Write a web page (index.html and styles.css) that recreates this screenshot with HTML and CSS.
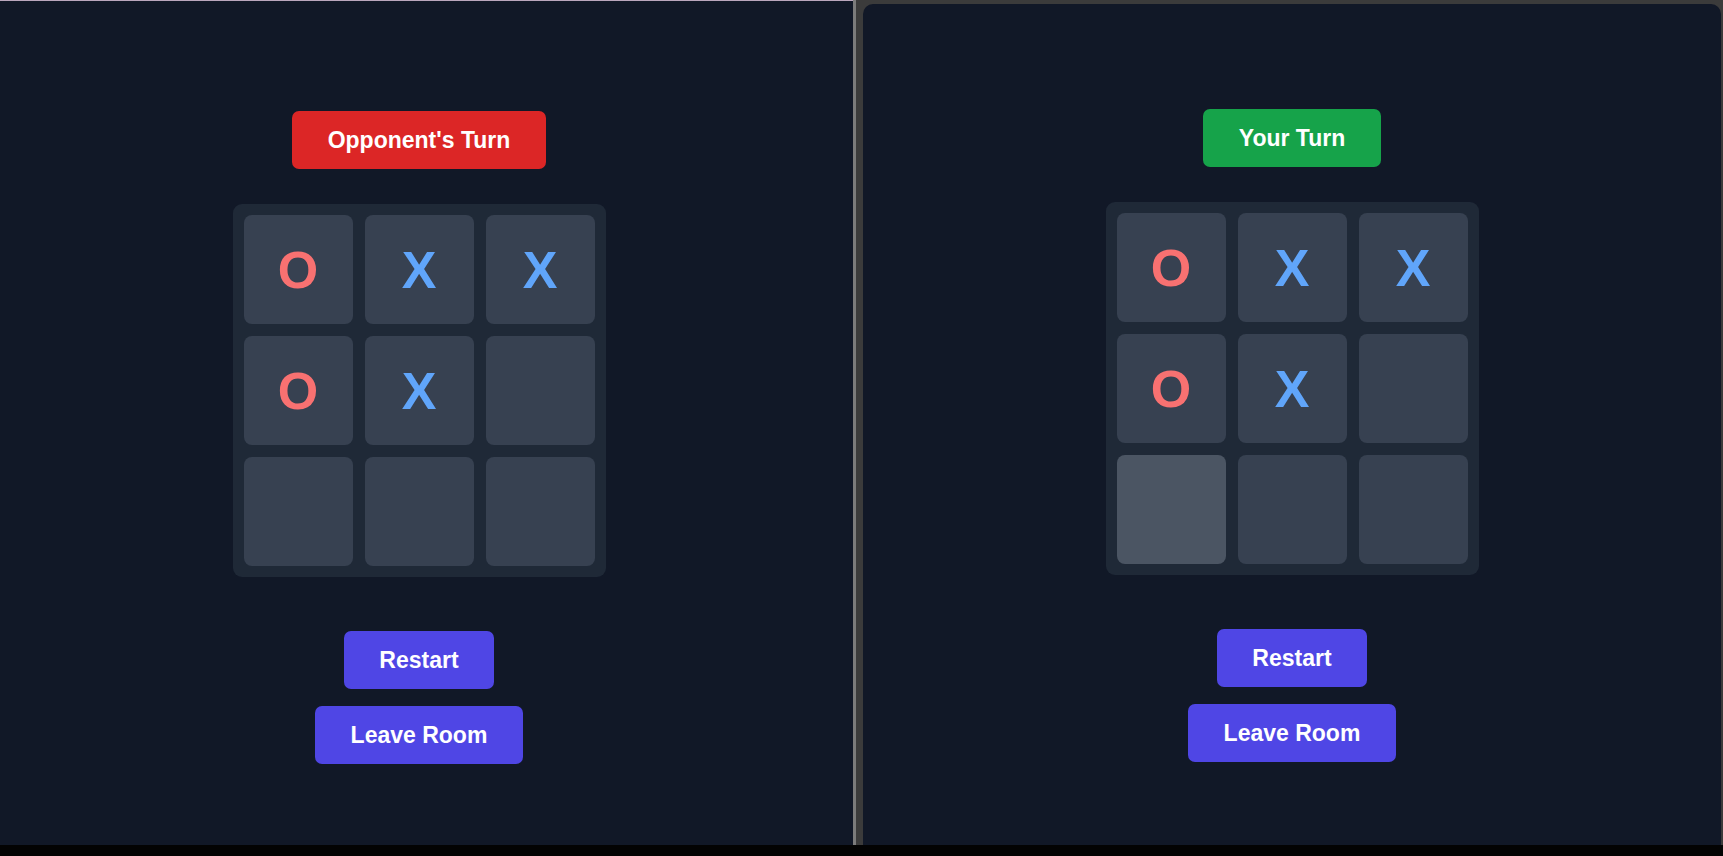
FILE: index.html
```html
<!DOCTYPE html>
<html lang="en">
<head>
<meta charset="utf-8">
<title>Tic Tac Toe</title>
<link rel="stylesheet" href="styles.css">
</head>
<body>
<div class="screen">
  <div class="windows">
    <section class="pane pane-left">
      <div class="game game-left">
        <div class="status status-wait">Opponent's Turn</div>
        <div class="board">
          <div class="cell o">O</div>
          <div class="cell x">X</div>
          <div class="cell x">X</div>
          <div class="cell o">O</div>
          <div class="cell x">X</div>
          <div class="cell"></div>
          <div class="cell"></div>
          <div class="cell"></div>
          <div class="cell"></div>
        </div>
        <button class="btn btn-restart">Restart</button>
        <button class="btn btn-leave">Leave Room</button>
      </div>
    </section>
    <div class="split"></div>
    <section class="pane pane-right">
      <div class="game game-right">
        <div class="status status-go">Your Turn</div>
        <div class="board">
          <div class="cell o">O</div>
          <div class="cell x">X</div>
          <div class="cell x">X</div>
          <div class="cell o">O</div>
          <div class="cell x">X</div>
          <div class="cell"></div>
          <div class="cell hover"></div>
          <div class="cell"></div>
          <div class="cell"></div>
        </div>
        <button class="btn btn-restart">Restart</button>
        <button class="btn btn-leave">Leave Room</button>
      </div>
    </section>
  </div>
  <div class="taskbar"></div>
</div>
</body>
</html>
```

FILE: styles.css
```css
* { box-sizing: border-box; }
html, body {
  margin: 0;
  padding: 0;
  background: #000;
  font-family: "Liberation Sans", Arial, sans-serif;
}
.screen {
  width: 1723px;
  height: 856px;
  display: flex;
  flex-direction: column;
  overflow: hidden;
}
.windows {
  height: 845px;
  display: flex;
  background: #3b3b3b;
}
.taskbar {
  flex: 1;
  background: #030303;
}
.pane {
  background: #111827;
}
.pane-left {
  width: 853px;
  padding-right: 15px;
  border-top: 1px solid #bba7bd;
}
.split {
  width: 3px;
  margin-right: 7px;
  background: #7b7b7b;
}
.pane-right {
  flex: 1;
  margin-top: 4px;
  margin-right: 2px;
  border-radius: 10px 10px 0 0;
}
.game {
  display: flex;
  flex-direction: column;
  align-items: center;
}
.game-left { padding-top: 110px; }
.game-right { padding-top: 105px; }
.status {
  height: 58px;
  padding: 0 35.5px;
  display: flex;
  align-items: center;
  border-radius: 7px;
  color: #fff;
  font-weight: 700;
  font-size: 23px;
}
.status-wait { background: #dc2626; }
.status-go { background: #16a34a; }
.board {
  margin-top: 35px;
  padding: 11px;
  display: grid;
  grid-template-columns: repeat(3, 109px);
  grid-auto-rows: 109px;
  gap: 12px;
  background: #1f2937;
  border-radius: 9px;
}
.cell {
  background: #374151;
  border-radius: 8px;
  display: flex;
  align-items: center;
  justify-content: center;
  font-weight: 700;
  font-size: 52px;
}
.cell.hover { background: #4b5563; }
.cell.o { color: #f87171; }
.cell.x { color: #60a5fa; }
.btn {
  height: 58px;
  padding: 0 35.5px;
  border: 0;
  border-radius: 7px;
  background: #4f46e5;
  color: #fff;
  font-family: "Liberation Sans", Arial, sans-serif;
  font-weight: 700;
  font-size: 23px;
}
.btn-restart { margin-top: 54px; }
.btn-leave { margin-top: 17px; }
```
